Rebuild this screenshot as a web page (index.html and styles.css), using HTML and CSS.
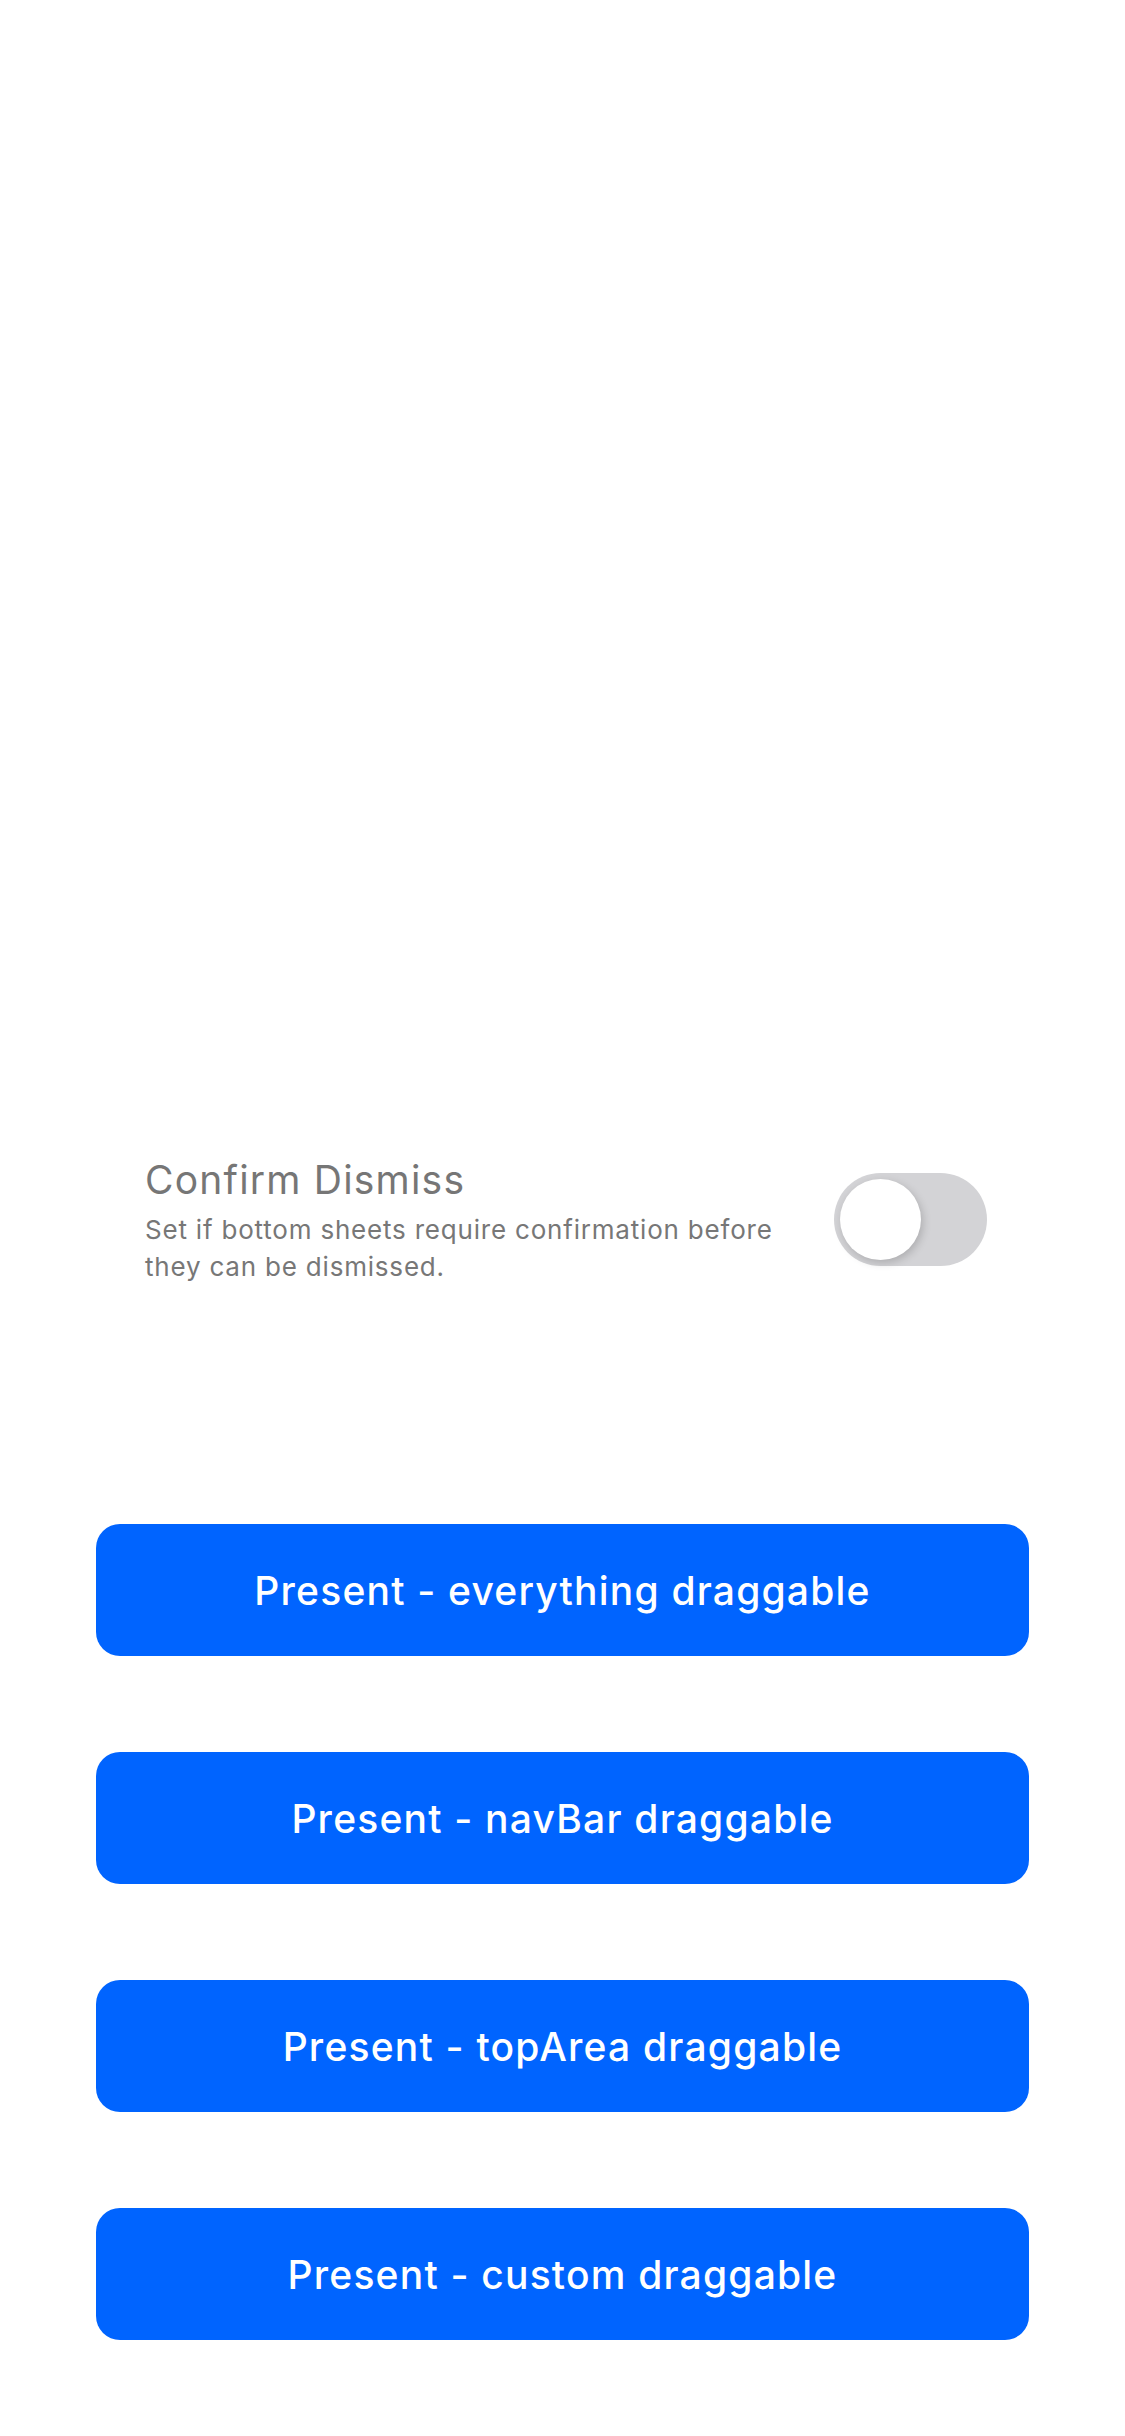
FILE: index.html
```html
<!DOCTYPE html>
<html lang="en">
<head>
<meta charset="utf-8">
<title>Bottom sheets</title>
<link rel="stylesheet" href="styles.css">
</head>
<body>
<main class="page">
  <section class="setting">
    <div class="setting-text">
      <h2 class="setting-title">Confirm Dismiss</h2>
      <p class="setting-desc">Set if bottom sheets require confirmation before they can be dismissed.</p>
    </div>
    <div class="toggle" role="switch" aria-checked="false">
      <span class="toggle-knob"></span>
    </div>
  </section>
  <section class="actions">
    <button class="btn">Present - everything draggable</button>
    <button class="btn">Present - navBar draggable</button>
    <button class="btn">Present - topArea draggable</button>
    <button class="btn">Present - custom draggable</button>
  </section>
</main>
</body>
</html>
```
FILE: styles.css
```css
html, body {
  margin: 0;
  padding: 0;
  background: #ffffff;
}
body {
  font-family: Inter, Lato, sans-serif;
  width: 1125px;
  height: 2436px;
  overflow: hidden;
}
.page {
  display: flex;
  flex-direction: column;
  padding: 1154px 96px 0 96px;
}
.setting {
  display: flex;
  align-items: center;
  justify-content: space-between;
  padding: 0 42px 0 49px;
}
.setting-text {
  width: 650px;
}
.setting-title {
  margin: 0;
  font-size: 39px;
  line-height: 52px;
  font-weight: 400;
  letter-spacing: 1.2px;
  color: #767676;
}
.setting-desc {
  margin: 5px 0 0 0;
  font-size: 26px;
  line-height: 37px;
  font-weight: 400;
  letter-spacing: 0.8px;
  color: #777777;
}
.toggle {
  position: relative;
  width: 153px;
  height: 93px;
  border-radius: 47px;
  background: #d3d3d6;
  flex-shrink: 0;
}
.toggle-knob {
  position: absolute;
  left: 6px;
  top: 6px;
  width: 81px;
  height: 81px;
  border-radius: 50%;
  background: #ffffff;
  box-shadow: 2px 3px 8px rgba(0, 0, 0, 0.18);
}
.actions {
  display: flex;
  flex-direction: column;
  gap: 96px;
  margin-top: 239px;
}
.btn {
  height: 132px;
  border: none;
  border-radius: 24px;
  background: #0064ff;
  color: #ffffff;
  font-family: Inter, Lato, sans-serif;
  font-size: 39px;
  font-weight: 500;
  letter-spacing: 1.2px;
  padding: 0;
}
```
